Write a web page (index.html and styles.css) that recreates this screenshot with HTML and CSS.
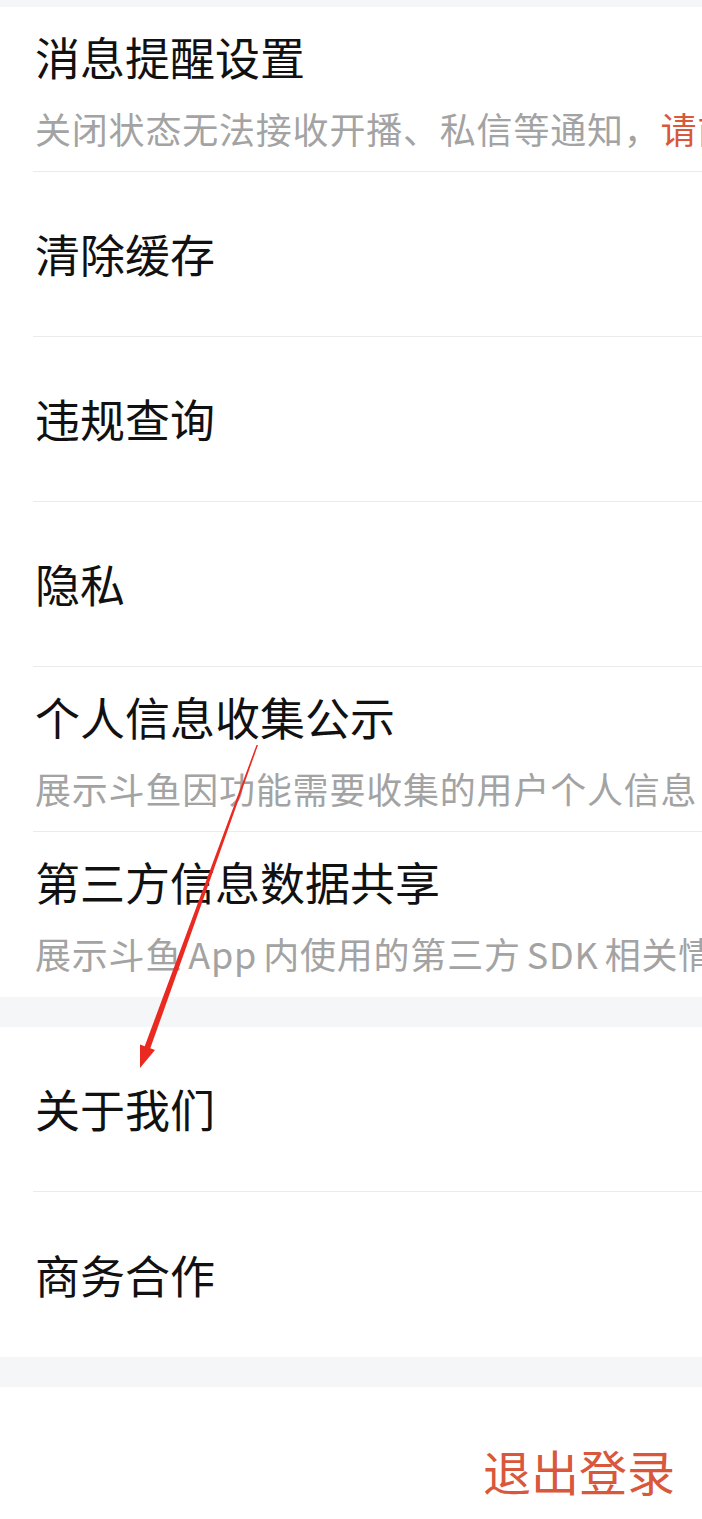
FILE: index.html
```html
<!DOCTYPE html>
<html lang="zh-CN">

<head>
    <meta charset="UTF-8" />
    <meta name="viewport" content="width=device-width, initial-scale=1.0" />
    <title>设置</title>
    <link rel="stylesheet" href="styles.css">
</head>

<body>
    <div class="band band-top"></div>

    <ul class="group">
        <li class="row row-two">
            <div class="title">消息提醒设置</div>
            <div class="sub">关闭状态无法接收开播、私信等通知，<span class="hint">请前往系统设置开启</span></div>
        </li>
        <li class="row"><div class="title">清除缓存</div></li>
        <li class="row"><div class="title">违规查询</div></li>
        <li class="row"><div class="title">隐私</div></li>
        <li class="row row-two">
            <div class="title">个人信息收集公示</div>
            <div class="sub">展示斗鱼因功能需要收集的用户个人信息</div>
        </li>
        <li class="row row-two last">
            <div class="title">第三方信息数据共享</div>
            <div class="sub">展示斗鱼<span class="latin">App</span>内使用的第三方<span class="latin">SDK</span>相关情况</div>
        </li>
    </ul>

    <div class="band"></div>

    <ul class="group">
        <li class="row"><div class="title">关于我们</div></li>
        <li class="row last"><div class="title">商务合作</div></li>
    </ul>

    <div class="band"></div>

    <div class="logout">
        <button class="logout-btn">退出登录</button>
    </div>

    <svg class="arrow" width="702" height="1519" viewBox="0 0 702 1519">
        <polygon points="256.5,745 258,745 150.3,1048.3 155,1050 140,1068 140,1044.6 144.7,1046.3" fill="#ea2a20" />
    </svg>
</body>

</html>
```

FILE: styles.css
```css
* {
    box-sizing: border-box;
    margin: 0;
    padding: 0;
}

body {
    font-family: "Noto Sans CJK SC", "Noto Sans", sans-serif;
    background-color: #ffffff;
    color: #111111;
    width: 702px;
    overflow: hidden;
    position: relative;
}

.band {
    height: 30px;
    background-color: #f5f6f8;
}

.band-top {
    height: 7px;
}

.group {
    list-style: none;
    padding-left: 33px;
}

.row {
    height: 165px;
    border-bottom: 1px solid #ebebeb;
    display: flex;
    flex-direction: column;
    justify-content: center;
    padding-left: 2px;
    white-space: nowrap;
    overflow: hidden;
}

.row.last {
    border-bottom: none;
}

.row-two {
    justify-content: flex-start;
    padding-top: 22px;
}

.title {
    font-size: 45px;
    line-height: 56px;
    color: #111111;
}

.sub {
    font-size: 36px;
    line-height: 46px;
    margin-top: 20px;
    color: #a3a3a3;
    letter-spacing: 0.8px;
}

.latin {
    margin: 0 6px;
}

.hint {
    color: #d9583c;
}

.logout {
    height: 132px;
    display: flex;
    justify-content: flex-end;
    align-items: center;
    padding-right: 27px;
    padding-top: 34px;
}

.logout-btn {
    background: none;
    border: none;
    font-family: inherit;
    font-size: 48px;
    line-height: 60px;
    color: #d9583c;
    cursor: pointer;
}

.arrow {
    position: absolute;
    left: 0;
    top: 0;
    pointer-events: none;
}
```
